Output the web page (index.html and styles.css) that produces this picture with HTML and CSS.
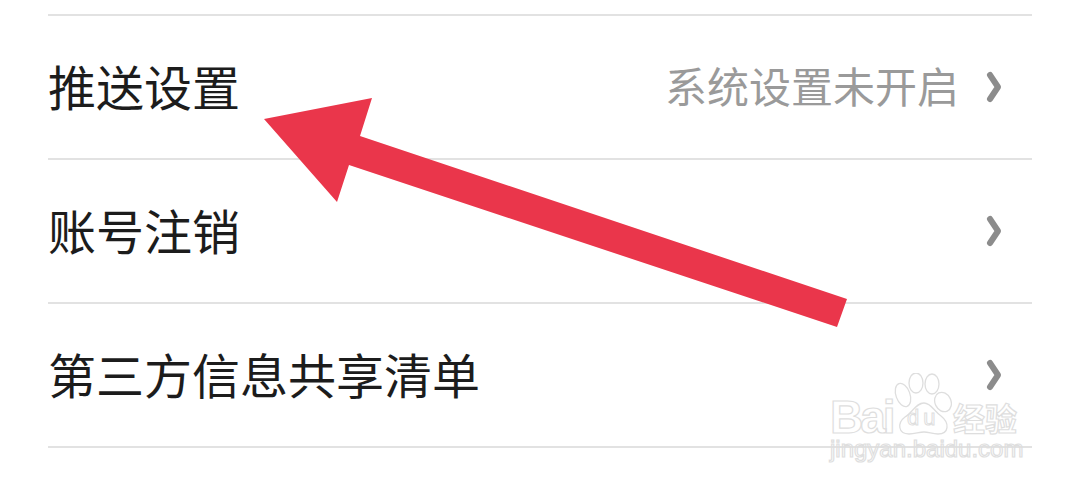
FILE: index.html
```html
<html>
<head>
    <meta charset="utf-8">
    <link rel="stylesheet" href="styles.css">
</head>
<body>

<div class="list">
    <div class="row">
        <span class="label">推送设置</span>
        <span class="status">系统设置未开启</span>
        <svg class="chevron" viewBox="0 0 18 30"><path d="M5 3 L13 15 L5 27"/></svg>
    </div>
    <div class="row">
        <span class="label">账号注销</span>
        <svg class="chevron" viewBox="0 0 18 30"><path d="M5 3 L13 15 L5 27"/></svg>
    </div>
    <div class="row">
        <span class="label">第三方信息共享清单</span>
        <svg class="chevron" viewBox="0 0 18 30"><path d="M5 3 L13 15 L5 27"/></svg>
    </div>
</div>

<svg class="arrow" viewBox="0 0 1080 488">
    <polygon points="264,119 372,98 360,136 847,299 837,327 349,165 337,202"/>
</svg>

<div class="watermark">
    <div class="mark-top">
        <span class="mark-bai">Bai</span>
        <div class="paw">
            <svg viewBox="0 0 58 62">
                <ellipse cx="9" cy="22" rx="7" ry="12" transform="rotate(-20 9 22)"/>
                <ellipse cx="22" cy="10" rx="7" ry="10"/>
                <ellipse cx="38" cy="11" rx="7" ry="10"/>
                <ellipse cx="49" cy="29" rx="8" ry="10" transform="rotate(-25 49 29)"/>
                <path d="M30 30 C37 30 40 38 47 43 C56 50 55 61 44 61 C38 61 35 59 30 59 C25 59 21 61 15 61 C4 61 3 50 11 44 C19 39 22 30 30 30 Z"/>
            </svg>
            <span class="mark-du">du</span>
        </div>
        <span class="mark-cn">经验</span>
    </div>
    <div class="mark-url">jingyan.baidu.com</div>
</div>

</body>
</html>
```

FILE: styles.css
```css
body{
    margin: 0;
    width: 1080px;
    height: 488px;
    overflow: hidden;
    position: relative;
    background-color: #fff;
    font-family: "Noto Sans CJK SC", "Liberation Sans", sans-serif;
}
.list{
    margin: 14px 48px 0 48px;
    border-top: 2px solid #e2e2e2;
}
.row{
    display: flex;
    align-items: center;
    height: 142px;
    padding-right: 29px;
    border-bottom: 2px solid #e2e2e2;
}
.label{
    flex: 1;
    font-size: 48px;
    line-height: 60px;
    color: #1c1c1c;
    position: relative;
    top: -2px;
}
.status{
    font-size: 42px;
    line-height: 60px;
    color: #9a9a9a;
    margin-right: 26px;
    position: relative;
    top: -2px;
}
.chevron{
    width: 18px;
    height: 30px;
    overflow: visible;
    fill: none;
    stroke: #8c8c8c;
    stroke-width: 6;
    stroke-linecap: round;
    stroke-linejoin: round;
}
.arrow{
    position: absolute;
    left: 0;
    top: 0;
    width: 1080px;
    height: 488px;
}
.arrow polygon{
    fill: #ea364b;
}
.watermark{
    position: absolute;
    left: 830px;
    top: 373px;
    width: 196px;
    color: transparent;
    -webkit-text-stroke: 1.2px #dedede;
    font-family: "Liberation Sans", sans-serif;
}
.mark-top{
    display: flex;
    align-items: flex-end;
    height: 62px;
}
.mark-bai{
    width: 64px;
    font-size: 46px;
    font-weight: bold;
    line-height: 36px;
    letter-spacing: -3px;
    white-space: nowrap;
}
.paw{
    position: relative;
    flex: none;
    width: 58px;
    height: 62px;
}
.paw svg{
    width: 58px;
    height: 62px;
    fill: #fff;
    stroke: #dedede;
    stroke-width: 1.3;
}
.mark-du{
    position: absolute;
    left: 13px;
    top: 34px;
    font-size: 22px;
    line-height: 22px;
    letter-spacing: 4px;
    -webkit-text-stroke-width: 1px;
}
.mark-cn{
    flex: none;
    font-family: "Noto Sans CJK SC", sans-serif;
    font-size: 32px;
    font-weight: bold;
    line-height: 32px;
    margin-left: 1px;
    margin-bottom: 2px;
    white-space: nowrap;
}
.mark-url{
    font-size: 24px;
    line-height: 24px;
    margin-top: 2px;
    white-space: nowrap;
}
```
